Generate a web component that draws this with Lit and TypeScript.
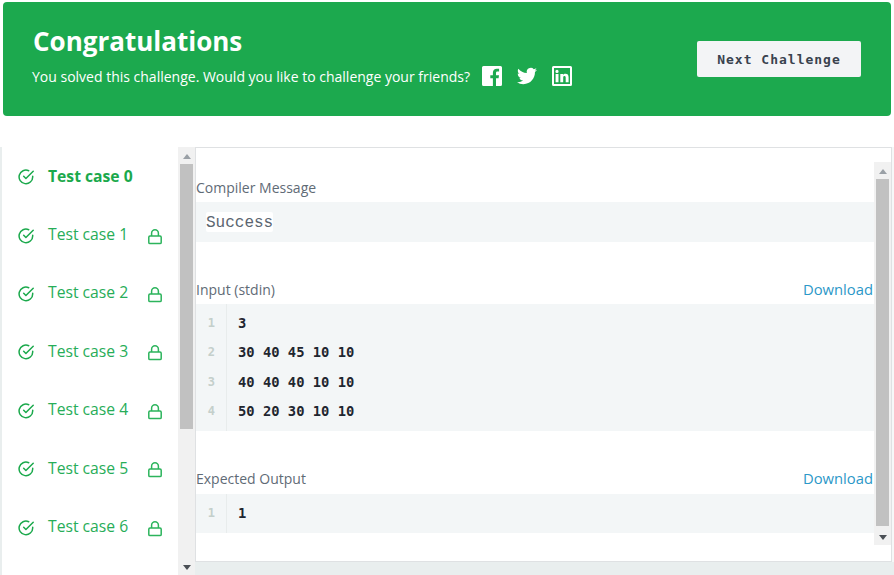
import { LitElement, html, css } from "lit";
import { customElement } from "lit/decorators.js";

const check = html`<svg class="check" viewBox="0 0 16 16" width="16" height="16" fill="none" stroke="#1ba94c" stroke-width="1.5" stroke-linecap="round" stroke-linejoin="round"><path d="M14.700 7.200v.7a6.800 6.800 0 1 1-4-6.200"/><path d="M15.200 2.200 7.900 9.500 5.700 7.300"/></svg>`;
const lock = html`<svg class="lock" viewBox="0 0 14 16" width="14" height="16" fill="none" stroke="#2cb45c" stroke-width="1.500" stroke-linejoin="round"><rect x="0.800" y="7" width="12.400" height="7.600" rx="1.200"/><path d="M3.600 7V4.200a3.400 3.400 0 0 1 6.800 0V7"/></svg>`;

const Tri = (up: boolean) => html`<svg viewBox="0 0 8 5" width="8" height="5" fill="${up ? "#9aa0a6" : "#4a4f55"}"><path d="${up ? "M4 0 8 5H0z" : "M0 0h8L4 5z"}"/></svg>`;

@customElement("app-root")
export class AppRoot extends LitElement {
  static styles = css`
    :host { display: block; width: 894px; height: 575px; overflow: hidden; background: #fff; font-family: "Open Sans", sans-serif; }
    .banner { margin: 2px 3px 0; height: 114px; box-sizing: border-box; background: #1ca94e; border-radius: 4px; color: #fff; display: flex; align-items: center; justify-content: space-between; padding: 0 30px 0 30px; }
    .intro { padding-bottom: 6px; }
    h1 { margin: 0 0 10px; font-size: 26px; line-height: 32px; font-weight: 700; }
    .sub { display: flex; align-items: center; font-size: 14px; line-height: 20px; margin-top: 3px; margin-left: -1px; }
    .social { display: flex; align-items: center; gap: 15px; margin: -2px 0 0 12px; }
    .social svg { display: block; }
    .next { width: 164px; height: 36px; background: #f3f4f6; border-radius: 2px; color: #39424e; font: 700 13px "DejaVu Sans Mono", monospace; letter-spacing: 1px; display: flex; align-items: center; justify-content: center; }
    .main { margin-top: 31px; height: 428px; background: #e9eeee; display: flex; padding-left: 2px; }
    .side { width: 176px; background: #fff; flex: none; overflow: hidden; padding-top: 1px; }
    .case { height: 58.4px; display: flex; align-items: center; padding-left: 16px; box-sizing: border-box; color: #27ad58; font-size: 15.7px; }
    .case .label { margin-left: 14px; width: 93px; position: relative; top: -1.5px; white-space: nowrap; }
    .case.on { color: #1ba94c; }
    .case.on .label { font-weight: 700; top: -1px; }
    .case .lock { margin-left: 7px; position: relative; top: 1px; }
    .case .check { flex: none; }
    .bar { width: 17px; flex: none; background: #f1f1f1; display: flex; flex-direction: column; align-items: center; padding-top: 1px; box-sizing: border-box; }
    .arrow { height: 16px; display: flex; align-items: center; justify-content: center; flex: none; }
    .track { flex: 1; width: 100%; padding: 0 2px; box-sizing: border-box; display: flex; }
    .thumb { width: 100%; background: #c1c1c1; }
    .side-bar .thumb { height: 265px; }
    .panel { width: 697px; height: 415px; flex: none; box-sizing: border-box; background: #fff; border: 1px solid #dfe1e3; box-shadow: 3px 0 0 #f6f8f8; display: flex; }
    .content { flex: 1; min-width: 0; padding-top: 29px; }
    .panel-bar { height: 383px; margin-top: 14px; }
    .panel-bar .thumb { height: 347px; }
    .head { display: flex; justify-content: space-between; align-items: flex-end; height: 25px; box-sizing: border-box; padding: 0 1px 3px 0; font-size: 14px; color: #5f6b76; line-height: 22px; }
    .head.tall { height: 26px; padding-bottom: 4px; }
    .head a { color: #2c98c8; font-size: 14.8px; margin-bottom: 1px; }
    .msg { background: #f3f6f7; height: 40px; display: flex; align-items: center; padding-left: 10px; font: 400 16px "Liberation Mono", monospace; color: #5b6570; }
    .msg span { display: block; background: #fff; border-radius: 2px; line-height: 20px; height: 20px; width: 67px; text-align: center; position: relative; }
    .msg b { font-weight: 400; display: block; padding-top: 1px; }
    .code { background: #f3f6f7; display: flex; font: 700 13.8px/29.3px "DejaVu Sans Mono", monospace; color: #1f2630; padding: 5px 0; }
    .nums { width: 31px; box-sizing: border-box; border-right: 1px solid #e8ecec; text-align: right; padding-right: 11px; color: #c4cfcb; font-size: 12px; flex: none; margin: -5px 0; padding-top: 5px; padding-bottom: 5px; }
    .lines { padding-left: 11px; }
    .lines div, .nums div { height: 29.3px; }
    .gap1 { height: 37px; }
    .gap2 { height: 37px; }
  `;

  render() {
    const cases = [0, 1, 2, 3, 4, 5, 6];
    return html`
      <div class="banner">
        <div class="intro">
          <h1>Congratulations</h1>
          <div class="sub">You solved this challenge. Would you like to challenge your friends?
            <div class="social">
              <svg viewBox="0 0 20 20" width="20" height="20"><path fill="#fff" d="M1.500 0h17A1.500 1.500 0 0 1 20 1.500v17a1.500 1.500 0 0 1-1.500 1.500H14v-7.700h2.600l.4-3H14V7c0-.9.300-1.500 1.500-1.500H17.100V2.800c-.3 0-1.200-.1-2.300-.1-2.300 0-3.900 1.400-3.900 4v2.600H8.300v3h2.600V20H1.500A1.500 1.500 0 0 1 0 18.500v-17A1.500 1.500 0 0 1 1.500 0z"/></svg>
              <svg viewBox="0 0 24 24" width="20" height="20"><path fill="#fff" d="M23.950 4.570a10 10 0 0 1-2.820.77 4.960 4.960 0 0 0 2.160-2.720c-.95.550-2 .95-3.130 1.180a4.920 4.920 0 0 0-8.380 4.480C7.690 8.100 4.070 6.130 1.640 3.160a4.820 4.820 0 0 0-.67 2.480c0 1.710.87 3.210 2.190 4.100a4.900 4.900 0 0 1-2.230-.62v.06a4.920 4.920 0 0 0 3.950 4.830 5 5 0 0 1-2.210.09 4.940 4.940 0 0 0 4.600 3.420A9.870 9.870 0 0 1 0 19.540a14 14 0 0 0 7.560 2.210c9.050 0 14-7.500 14-13.980 0-.21 0-.42-.02-.63a9.940 9.940 0 0 0 2.460-2.550z"/></svg>
              <svg viewBox="0 0 20 20" width="20" height="20"><path fill="#fff" fill-rule="evenodd" d="M1.500 0h17A1.500 1.500 0 0 1 20 1.500v17a1.500 1.500 0 0 1-1.500 1.500h-17A1.500 1.500 0 0 1 0 18.500v-17A1.500 1.500 0 0 1 1.500 0zM2 2v16h16V2zM3.600 8v8.200h2.900V8zM5 3.800a1.600 1.600 0 1 0 0 3.200 1.600 1.600 0 0 0 0-3.200zM8.300 8v8.200h2.900v-4.300c0-1.200.3-1.800 1.300-1.800s1.200.7 1.200 1.900v4.200h2.900v-4.900c0-2.400-1.100-3.500-3.100-3.500-1.200 0-1.900.5-2.300 1.200V8z"/></svg>
            </div>
          </div>
        </div>
        <div class="next">Next Challenge</div>
      </div>
      <div class="main">
        <div class="side">
          ${cases.map((i) => html`<div class="case ${i === 0 ? "on" : ""}">${check}<span class="label">Test case ${i}</span>${i === 0 ? "" : lock}</div>`)}
        </div>
        <div class="bar side-bar">
          <div class="arrow">${Tri(true)}</div>
          <div class="track"><div class="thumb"></div></div>
          <div class="arrow">${Tri(false)}</div>
        </div>
        <div class="panel">
          <div class="content">
            <div class="head"><span>Compiler Message</span></div>
            <div class="msg"><span><b>Success</b></span></div>
            <div class="gap1"></div>
            <div class="head"><span>Input (stdin)</span><a>Download</a></div>
            <div class="code">
              <div class="nums"><div>1</div><div>2</div><div>3</div><div>4</div></div>
              <div class="lines"><div>3</div><div>30 40 45 10 10</div><div>40 40 40 10 10</div><div>50 20 30 10 10</div></div>
            </div>
            <div class="gap2"></div>
            <div class="head tall"><span>Expected Output</span><a>Download</a></div>
            <div class="code">
              <div class="nums"><div>1</div></div>
              <div class="lines"><div>1</div></div>
            </div>
          </div>
          <div class="bar panel-bar">
            <div class="arrow">${Tri(true)}</div>
            <div class="track"><div class="thumb"></div></div>
            <div class="arrow">${Tri(false)}</div>
          </div>
        </div>
      </div>
    `;
  }
}
